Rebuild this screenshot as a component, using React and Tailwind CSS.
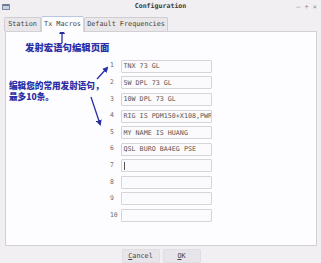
import React from 'react';

const MACROS = [
  'TNX 73 GL',
  '5W DPL 73 GL',
  '10W DPL 73 GL',
  'RIG IS PDM150+X108,PWR',
  'MY NAME IS HUANG',
  'QSL BURO BA4EG PSE',
  '',
  '',
  '',
  '',
];

const mono = { fontFamily: '"DejaVu Sans Mono", "Liberation Mono", monospace' };
const cjk = { fontFamily: '"Noto Sans CJK SC", "Noto Sans", sans-serif' };

export default function App() {
  return (
    <div className="relative w-[321px] h-[263px] overflow-hidden bg-[#f1eff2] flex flex-col" style={mono}>

      {/* Title bar */}
      <div className="relative h-[14px] flex items-center px-[2px]">
        <div className="w-[8px] h-[6px] rounded-[1px] border border-[#7d8aa3] bg-[#c9d0de] border-t-[2px] border-t-[#6b7a96]" />
        <div className="absolute inset-x-0 text-center text-[6.6px] font-bold text-[#3a3a3a]">Configuration</div>
        <div className="ml-auto flex items-center gap-[4px] text-[7px] text-[#8a8a8a] pr-[2px]">
          <span>–</span><span>+</span><span>×</span>
        </div>
      </div>

      {/* Tabs */}
      <div className="flex items-end h-[17px] pl-[4px] text-[6.8px] text-[#444]">
        <div className="h-[14px] w-[37px] flex items-center justify-center bg-[#e9e7ea] border border-b-0 border-[#cfcdd1] rounded-t-[2px]">Station</div>
        <div className="h-[16px] w-[43px] flex items-center justify-center bg-[#fdfcfe] border border-b-0 border-[#cfd6e2] border-t-[#b9c8dd] rounded-t-[2px] -mb-px relative z-10">Tx Macros</div>
        <div className="h-[14px] w-[84px] flex items-center justify-center bg-[#e9e7ea] border border-b-0 border-[#cfcdd1] rounded-t-[2px]">Default Frequencies</div>
      </div>

      {/* Panel */}
      <div className="mx-[5px] mr-[4px] h-[217px] bg-[#fdfcfe] border border-[#d2d0d4] pt-[28px]">
        <div className="flex flex-col gap-[3.6px] pl-[104px]">
          {MACROS.map((m, i) => (
            <div key={i} className="flex items-center h-[13px]">
              <span className="w-[11px] text-[6.4px] text-[#6a6a6a]">{i + 1}</span>
              <div className="w-[91px] h-[13px] border border-[#d6d4d8] bg-[#fbfafc] rounded-[1px] flex items-center pl-[1.5px] text-[6.7px] text-[#555] whitespace-nowrap overflow-hidden">
                {i === 6 ? <span className="w-px h-[8px] bg-[#555]" /> : m}
              </div>
            </div>
          ))}
        </div>
      </div>

      {/* Buttons */}
      <div className="flex justify-center gap-[3px] pt-[3px] pl-[1px] text-[6.8px] text-[#444]">
        <div className="w-[38px] h-[14px] bg-[#e7e5e9] border border-[#e0dee2] rounded-[1px] flex items-center justify-center"><span><u>C</u>ancel</span></div>
        <div className="w-[38px] h-[14px] bg-[#e7e5e9] border border-[#e0dee2] rounded-[1px] flex items-center justify-center"><span><u>O</u>K</span></div>
      </div>

      {/* Annotations */}
      <div className="absolute left-[25px] top-[43px] text-[9.4px] font-black text-[#2a2fa6] leading-none" style={cjk}>发射宏语句编辑页面</div>
      <div className="absolute left-[9px] top-[80px] text-[8.6px] font-black text-[#2a2fa6] leading-[11px]" style={cjk}>
        <div>编辑您的常用发射语句，</div>
        <div>最多10条。</div>
      </div>
      <svg className="absolute inset-0 pointer-events-none" width="321" height="263">
        <defs>
          <marker id="ah" markerWidth="6" markerHeight="6" refX="4" refY="3" orient="auto" markerUnits="userSpaceOnUse">
            <path d="M0,0 L6,3 L0,6 Z" fill="#2a2fa6" />
          </marker>
        </defs>
        <line x1="62" y1="43" x2="62" y2="30" stroke="#2a2fa6" strokeWidth="1.3" markerEnd="url(#ah)" />
        <line x1="97" y1="79" x2="107" y2="68" stroke="#2a2fa6" strokeWidth="1.3" markerEnd="url(#ah)" />
        <line x1="91" y1="97" x2="100" y2="124" stroke="#2a2fa6" strokeWidth="1.3" markerEnd="url(#ah)" />
      </svg>
    </div>
  );
}
